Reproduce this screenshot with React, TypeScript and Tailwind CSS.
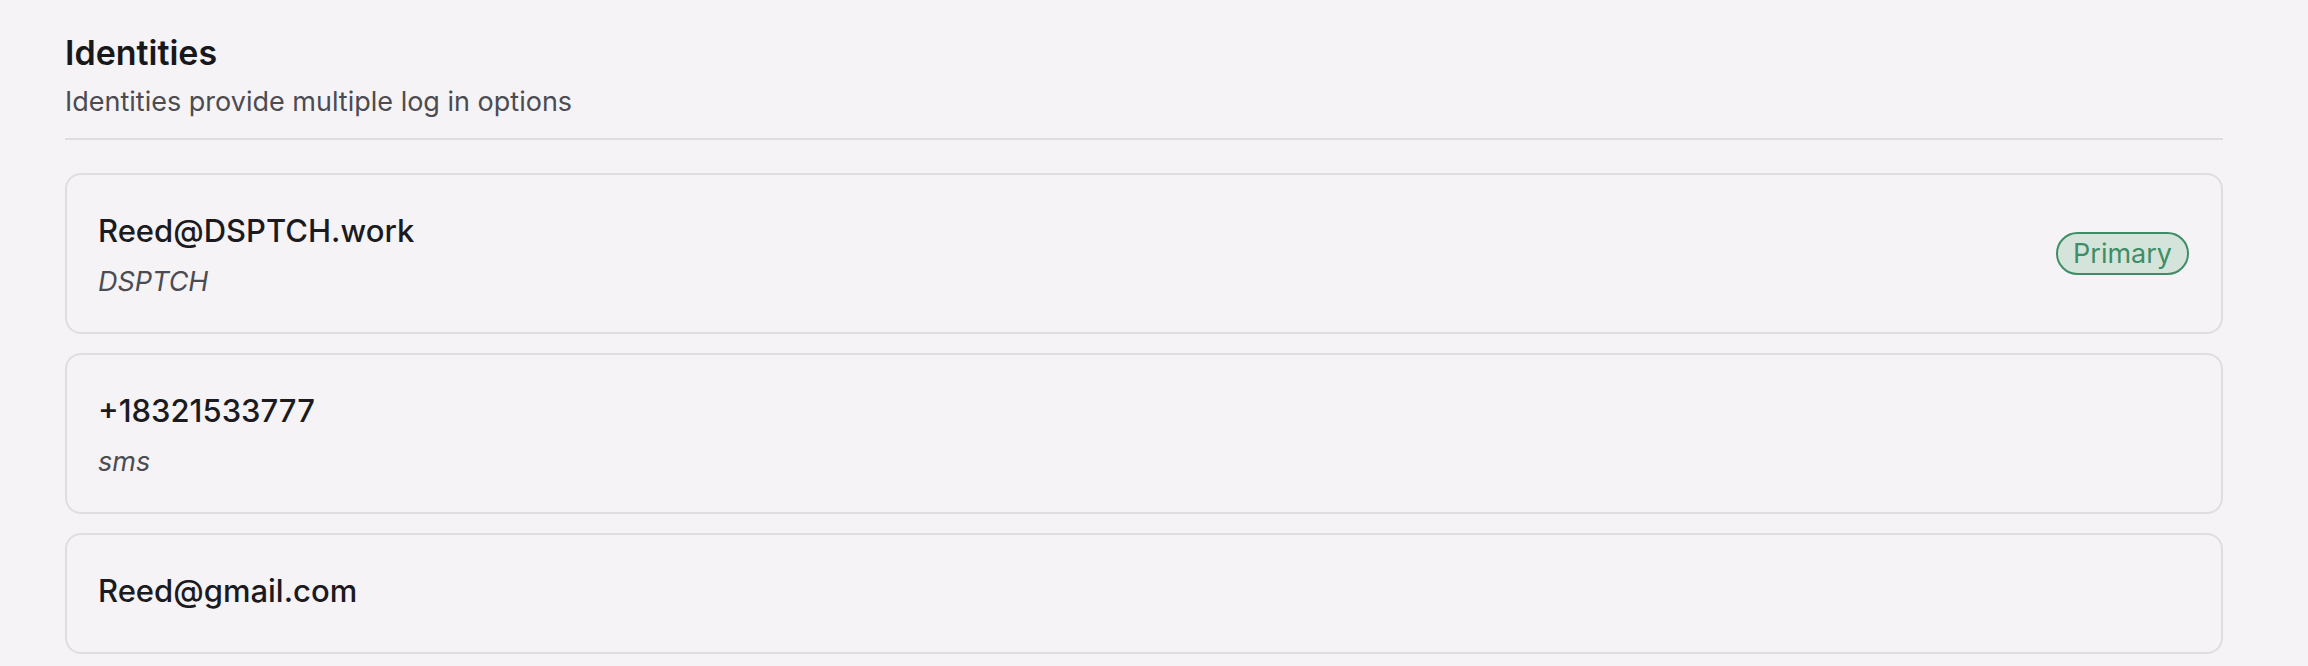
import React from "react";

type Identity = { value: string; kind?: string; primary?: boolean };

const identities: Identity[] = [
  { value: "Reed@DSPTCH.work", kind: "DSPTCH", primary: true },
  { value: "+18321533777", kind: "sms" },
  { value: "Reed@gmail.com" },
];

function IdentityCard({ item }: { item: Identity }) {
  return (
    <div
      className={
        "flex items-center justify-between rounded-2xl border-2 border-[#dedde1] pl-[31px] pr-[32px] pt-[36px] " +
        (item.kind ? "pb-[36px]" : "pb-[41px]")
      }
    >
      <div className="flex flex-col">
        <div className="text-[31px] leading-[40px] font-medium text-[#1b1b1f]">{item.value}</div>
        {item.kind && (
          <div className="mt-[17px] text-[27px] leading-[28px] italic text-[#4b4b51]">{item.kind}</div>
        )}
      </div>
      {item.primary && (
        <span className="rounded-full border-2 border-[#3f8d66] bg-[#d4e4db] px-[15px] text-[27px] leading-[39px] text-[#3f8d66]">
          Primary
        </span>
      )}
    </div>
  );
}

export default function App() {
  return (
    <div
      className="min-h-[666px] bg-[#f5f3f6] pt-[33px] pl-[65px]"
      style={{ fontFamily: "Inter, 'Noto Sans', sans-serif" }}
    >
      <div className="w-[2158px]">
        <h1 className="text-[34px] leading-[40px] font-semibold text-[#18181b]">Identities</h1>
        <p className="mt-[13px] text-[27px] leading-[32px] text-[#4b4b51]">
          Identities provide multiple log in options
        </p>
        <div className="mt-[20px] h-[2px] bg-[#dedde1]" />
        <div className="mt-[33px] flex flex-col gap-[19px]">
          {identities.map((it) => (
            <IdentityCard key={it.value} item={it} />
          ))}
        </div>
      </div>
    </div>
  );
}
